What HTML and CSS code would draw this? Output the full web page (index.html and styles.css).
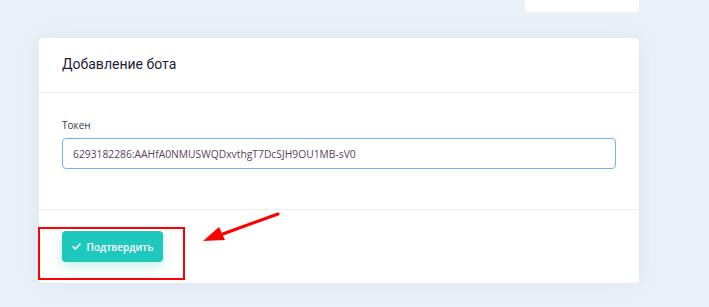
FILE: index.html
```html
<!DOCTYPE html>
<html lang="ru">
<head>
<meta charset="utf-8">
<link rel="stylesheet" href="styles.css">
</head>
<body>
<div class="page">
  <div class="topbar"><div class="mini-card"></div></div>
  <div class="card">
    <div class="card-header">Добавление бота</div>
    <div class="card-body">
      <label class="label">Токен</label>
      <div class="input">6293182286:AAHfA0NMUSWQDxvthgT7DcSJH9OU1MB-sV0</div>
    </div>
    <div class="card-footer">
      <button class="btn">
        <svg class="check" viewBox="0 0 10 8" width="9" height="7"><path d="M1 4.2 L3.7 6.8 L9 1.2" fill="none" stroke="#fff" stroke-width="1.9" stroke-linecap="round" stroke-linejoin="round"/></svg>
        Подтвердить
      </button>
    </div>
  </div>
</div>
<div class="annot-box"></div>
<svg class="annot-arrow" width="709" height="307" viewBox="0 0 709 307">
  <line x1="278" y1="214" x2="220" y2="235" stroke="#f00" stroke-width="3" stroke-linecap="round"/>
  <polygon points="203,241 219,227 225,240" fill="#f00"/>
</svg>
</body>
</html>
```
FILE: styles.css
```css
html, body {
  margin: 0;
  padding: 0;
  background: #e9f1f8;
  width: 709px;
  height: 307px;
  overflow: hidden;
  position: relative;
}
.page {
  margin-left: 39px;
  width: 600px;
  display: flex;
  flex-direction: column;
}
.topbar {
  display: flex;
  justify-content: flex-end;
  height: 12px;
}
.mini-card {
  width: 114px;
  height: 12px;
  background: #fff;
  border-radius: 0 0 4px 4px;
}
.card {
  margin-top: 26px;
  background: #fff;
  border-radius: 4px;
  height: 245px;
  box-shadow: 0 0 22px rgba(40, 60, 140, 0.07);
  display: flex;
  flex-direction: column;
}
.card-header {
  height: 55px;
  box-sizing: border-box;
  padding: 18px 23px 0;
  font-family: Roboto, "Liberation Sans", sans-serif;
  font-size: 14px;
  font-weight: 400;
  color: #1d1e36;
  border-bottom: 1px solid #eceef4;
}
.card-body {
  height: 117px;
  box-sizing: border-box;
  padding: 25px 23px 0;
  border-bottom: 1px solid #eceef4;
  display: flex;
  flex-direction: column;
}
.label {
  font-family: "Open Sans", "Liberation Sans", sans-serif;
  font-size: 10px;
  color: #3a3a4c;
  line-height: 14px;
  margin-bottom: 6px;
}
.input {
  height: 31px;
  box-sizing: border-box;
  border: 1px solid #6db4fb;
  border-radius: 4px;
  padding: 0 10px;
  font-family: "Open Sans", "Liberation Sans", sans-serif;
  font-size: 10.3px;
  color: #5b3f5f;
  display: flex;
  align-items: center;
}
.card-footer {
  padding: 21px 23px 0;
}
.btn {
  width: 101px;
  height: 31px;
  border: 0;
  border-radius: 4px;
  background: #1fc8bd;
  box-shadow: 0 5px 12px rgba(31, 200, 189, 0.25);
  color: #fff;
  font-family: "Open Sans", "Liberation Sans", sans-serif;
  font-weight: 600;
  font-size: 10px;
  display: flex;
  align-items: center;
  justify-content: center;
  gap: 6px;
  padding: 0;
}
.annot-box {
  position: absolute;
  left: 38px;
  top: 227px;
  width: 147px;
  height: 53px;
  box-sizing: border-box;
  border: 2px solid #f00;
}
.annot-arrow {
  position: absolute;
  left: 0;
  top: 0;
}
```
